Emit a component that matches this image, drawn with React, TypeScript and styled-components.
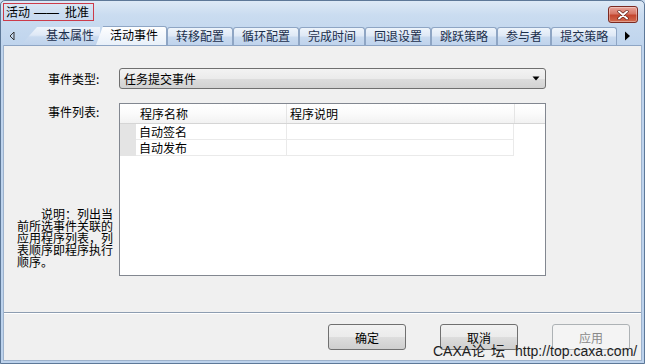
import React from 'react';
import styled, { createGlobalStyle, css } from 'styled-components';

const FONT = `"Noto Sans CJK SC", "Liberation Sans", sans-serif`;

const GlobalStyle = createGlobalStyle`
  html, body { margin: 0; padding: 0; width: 645px; height: 364px; overflow: hidden; background: #c8daee; }
  * { box-sizing: border-box; }
`;

const Window = styled.div`
  position: relative;
  width: 645px;
  height: 364px;
  display: flex;
  flex-direction: column;
  font-family: ${FONT};
  font-size: 12px;
  color: #000;
  background: linear-gradient(180deg, #dde9f6 0px, #cadcf0 14px, #bfd4ed 45px, #bcd2ec 100%);
  border: 1px solid #5d7898;
  border-radius: 5px 5px 0 0;
`;

const TitleBar = styled.div`
  height: 23px;
  display: flex;
  align-items: flex-start;
  justify-content: space-between;
  padding: 2px 6px 0 2px;
`;

const TitleBox = styled.div`
  width: 91px;
  height: 18px;
  line-height: 16px;
  padding: 0 2px;
  border: 1px solid #cc3b4a;
  white-space: nowrap;
  color: #000;
`;

const Dash = styled.span`
  font-family: "Liberation Sans", sans-serif;
  font-size: 12.5px;
  margin: 0 6px 0 4px;
`;

const CloseButton = styled.div`
  width: 30px;
  height: 17px;
  margin-top: 3px;
  display: flex;
  align-items: center;
  justify-content: center;
  border: 1px solid #7b2a22;
  border-radius: 3px;
  background: linear-gradient(180deg, #e8a49a 0%, #d77766 45%, #c4462f 55%, #d26b4f 100%);
  box-shadow: inset 0 0 0 1px rgba(255, 255, 255, 0.35);
`;

const TabStrip = styled.div`
  height: 21px;
  display: flex;
  align-items: flex-end;
  padding-left: 2px;
`;

const ArrowBox = styled.div<{ $w: number }>`
  width: ${(p) => p.$w}px;
  height: 19px;
  display: flex;
  align-items: center;
  justify-content: center;
`;

const Tab = styled.div<{ $active?: boolean; $first?: boolean }>`
  position: relative;
  height: 18px;
  line-height: 16px;
  padding: 0 8px;
  white-space: nowrap;
  color: #1c2f4c;
  border: 1px solid #8ea5c4;
  border-bottom: none;
  border-radius: 3px 3px 0 0;
  background: linear-gradient(180deg, #eef4fb 0%, #dfe9f6 45%, #c9daef 55%, #bfd3ec 100%);
  ${(p) =>
    p.$first &&
    css`
      padding: 0 6px 0 25px;
      border: none;
      border-radius: 0;
      clip-path: polygon(16px 0, 100% 0, 100% 100%, 0 100%);
    `}
  ${(p) =>
    p.$active &&
    css`
      z-index: 2;
      height: 19px;
      margin-left: -4px;
      padding: 1px 9px 0 14px;
      color: #000;
      border: none;
      border-radius: 0 3px 0 0;
      clip-path: polygon(7px 0, 100% 0, 100% 100%, 0 100%);
      background: linear-gradient(180deg, #ffffff 0%, #f3f7fc 50%, #e8f0f9 100%);
      box-shadow: inset -1px 0 0 #8ea5c4, inset 0 1px 0 #8ea5c4;
    `}
`;

const Client = styled.div`
  flex: 1;
  display: flex;
  flex-direction: column;
  margin: 0 2px 2px 2px;
  background: #f0f0f0;
  border-left: 1px solid #9db2cc;
  border-right: 1px solid #9db2cc;
  border-bottom: 1px solid #9db2cc;
`;

const Panel = styled.div`
  height: 268px;
  display: grid;
  grid-template-columns: 96px 427px;
  grid-template-rows: 21px 173px;
  column-gap: 6px;
  row-gap: 14px;
  align-content: start;
  padding: 22px 0 0 13px;
  border-top: 1px solid #8ea5c4;
  border-bottom: 1px solid #8d9db1;
  box-shadow: 0 1px 0 #ffffff;
`;

const FieldLabel = styled.div<{ $top?: boolean }>`
  padding-left: 31px;
  line-height: 16px;
  white-space: nowrap;
  align-self: ${(p) => (p.$top ? 'start' : 'center')};
  padding-top: ${(p) => (p.$top ? '1px' : '0')};
`;

const LeftColumn = styled.div`
  display: flex;
  flex-direction: column;
  justify-content: space-between;
  padding-bottom: 8px;
`;

const Note = styled.div`
  width: 97px;
  line-height: 12px;
  text-indent: 24px;
  word-break: break-all;
`;

const Select = styled.div`
  display: flex;
  align-items: center;
  justify-content: space-between;
  padding: 0 5px 0 4px;
  border: 1px solid #6f6f6f;
  border-radius: 3px;
  background: linear-gradient(180deg, #f3f3f3 0%, #ebebeb 50%, #dddddd 51%, #d2d2d2 100%);
  line-height: 16px;
`;

const ListBox = styled.div`
  border: 1px solid #828790;
  background: #ffffff;
  display: flex;
  flex-direction: column;
`;

const HeaderRow = styled.div`
  display: grid;
  grid-template-columns: 166px 228px 1fr;
  height: 20px;
  background: linear-gradient(180deg, #ffffff 0%, #fbfbfb 50%, #f2f2f2 100%);
  border-bottom: 1px solid #d5d5d5;
`;

const HeaderCell = styled.div<{ $pad: number; $divider?: boolean }>`
  padding-left: ${(p) => p.$pad}px;
  line-height: 19px;
  border-left: ${(p) => (p.$divider ? '1px solid #e5e5e5' : 'none')};
  white-space: nowrap;
`;

const BodyRow = styled.div`
  display: grid;
  grid-template-columns: 16px 150px 228px;
  height: 16px;
`;

const RowHead = styled.div`
  background: #e4e4e4;
`;

const Cell = styled.div<{ $divider?: boolean }>`
  padding-left: 3px;
  line-height: 15px;
  border-bottom: 1px solid #eaeaea;
  border-left: ${(p) => (p.$divider ? '1px solid #eaeaea' : 'none')};
  border-right: ${(p) => (p.$divider ? '1px solid #eaeaea' : 'none')};
  white-space: nowrap;
`;

const Footer = styled.div`
  flex: 1;
  display: flex;
  justify-content: flex-end;
  align-items: flex-start;
  gap: 34px;
  padding: 11px 11px 0 0;
`;

const Button = styled.div<{ $disabled?: boolean }>`
  width: 78px;
  height: 26px;
  display: flex;
  align-items: center;
  justify-content: center;
  border: 1px solid #707070;
  border-radius: 3px;
  background: linear-gradient(180deg, #f2f2f2 0%, #ebebeb 50%, #dddddd 51%, #cfcfcf 100%);
  color: #000;
  ${(p) =>
    p.$disabled &&
    css`
      border-color: #adb2b5;
      background: #f4f4f4;
      color: #8a8a8a;
    `}
`;

const Watermark = styled.div`
  position: absolute;
  left: 432px;
  top: 341px;
  font-family: "Liberation Sans", "Noto Sans CJK SC", sans-serif;
  font-size: 14px;
  line-height: 18px;
  color: #1e1e1e;
  white-space: nowrap;
  pointer-events: none;
`;

const Spaced = styled.span`
  letter-spacing: 6px;
`;

const tabs = ['转移配置', '循环配置', '完成时间', '回退设置', '跳跃策略', '参与者', '提交策略'];

export default function App() {
  return (
    <>
      <GlobalStyle />
      <Window>
        <TitleBar>
          <TitleBox>
            活动<Dash>——</Dash>批准
          </TitleBox>
          <CloseButton>
            <svg width="12" height="10" viewBox="0 0 12 10">
              <path d="M2 1.5 L10 8.5 M10 1.5 L2 8.5" stroke="#5a1a12" strokeWidth="3.2" strokeLinecap="round" />
              <path d="M2 1.5 L10 8.5 M10 1.5 L2 8.5" stroke="#ffffff" strokeWidth="2" strokeLinecap="round" />
            </svg>
          </CloseButton>
        </TitleBar>
        <TabStrip>
          <ArrowBox $w={18}>
            <svg width="6" height="10" viewBox="0 0 6 10">
              <path d="M5 1 L1 5 L5 9 Z" fill="none" stroke="#333" strokeWidth="1" />
            </svg>
          </ArrowBox>
          <Tab $first>基本属性</Tab>
          <Tab $active>活动事件</Tab>
          {tabs.map((t) => (
            <Tab key={t}>{t}</Tab>
          ))}
          <ArrowBox $w={20}>
            <svg width="7" height="10" viewBox="0 0 7 10">
              <path d="M1 0.5 L6 5 L1 9.5 Z" fill="#000" />
            </svg>
          </ArrowBox>
        </TabStrip>
        <Client>
          <Panel>
            <FieldLabel>事件类型:</FieldLabel>
            <Select>
              <span>任务提交事件</span>
              <svg width="8" height="5" viewBox="0 0 8 5">
                <path d="M0.5 0.5 L7.5 0.5 L4 4.5 Z" fill="#000" />
              </svg>
            </Select>
            <LeftColumn>
              <FieldLabel $top>事件列表:</FieldLabel>
              <Note>说明：列出当前所选事件关联的应用程序列表，列表顺序即程序执行顺序。</Note>
            </LeftColumn>
            <ListBox>
              <HeaderRow>
                <HeaderCell $pad={20}>程序名称</HeaderCell>
                <HeaderCell $pad={3} $divider>
                  程序说明
                </HeaderCell>
                <HeaderCell $pad={0} $divider />
              </HeaderRow>
              {['自动签名', '自动发布'].map((name) => (
                <BodyRow key={name}>
                  <RowHead />
                  <Cell>{name}</Cell>
                  <Cell $divider />
                </BodyRow>
              ))}
            </ListBox>
          </Panel>
          <Footer>
            <Button>确定</Button>
            <Button>取消</Button>
            <Button $disabled>应用</Button>
          </Footer>
        </Client>
        <Watermark>
          CAXA<Spaced>论坛</Spaced> http://top.caxa.com/
        </Watermark>
      </Window>
    </>
  );
}
